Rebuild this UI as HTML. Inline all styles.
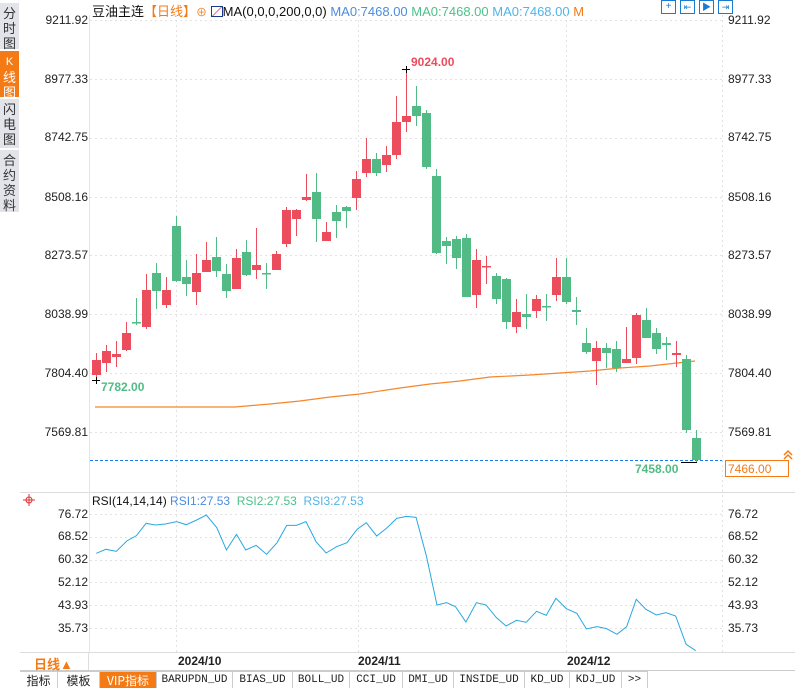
<!DOCTYPE html>
<html><head><meta charset="utf-8"><style>
*{margin:0;padding:0;box-sizing:border-box}
body{width:795px;height:688px;overflow:hidden;background:#fff;font-family:"Liberation Sans","Noto Sans CJK SC",sans-serif;position:relative}
.side{position:absolute;left:0;width:19px;background:#e3e3ea;color:#333;font-size:13px;line-height:15px;text-align:center;border-bottom:1px solid #fff}
.lab{position:absolute;font-size:12px;color:#222}
.l{right:707px;text-align:right}
.r{left:728px}
.tabs{position:absolute;top:671px;left:20px;height:17px;display:flex;font-size:11px;font-family:"Liberation Mono","Noto Sans CJK SC",monospace;border-top:1px solid #ccc}
.tabs div{border-right:1px solid #ccc;text-align:center;line-height:17px;color:#222}
</style></head><body>
<div class="side" style="top:3px;height:47px;padding-top:3px">分<br>时<br>图</div>
<div class="side" style="top:51px;height:47px;background:#f47a16;color:#fff;padding-top:2px"><span style="font-size:11px">K</span><br>线<br>图</div>
<div class="side" style="top:99px;height:50px;padding-top:3px">闪<br>电<br>图</div>
<div class="side" style="top:150px;height:63px;padding-top:3px">合<br>约<br>资<br>料</div>

<div style="position:absolute;top:1px;left:92px;font-size:13px;white-space:nowrap;color:#111">豆油主连<span style="color:#f47a16">【日线】</span><span style="color:#f47a16;font-size:11px">⊕</span> <span style="display:inline-block;width:12px;height:11px;border:1px solid #1a3a8a;vertical-align:-1px;background:linear-gradient(135deg,#fff 45%,#d33 50%,#fff 55%)"></span>MA(0,0,0,200,0,0) <span style="color:#4a8de0">MA0:7468.00</span> <span style="color:#4cc18a">MA0:7468.00</span> <span style="color:#4fb5e8">MA0:7468.00</span> <span style="color:#f47a16">M</span></div>
<div style="position:absolute;top:0;left:661px;display:flex;gap:4px">
<div style="width:15px;height:14px;border:1px solid #1a7bd0;color:#1a7bd0;font-size:10px;line-height:12px;text-align:center">+</div>
<div style="width:15px;height:14px;border:1px solid #1a7bd0;color:#1a7bd0;font-size:9px;line-height:12px;text-align:center">⇤</div>
<div style="width:15px;height:14px;border:1px solid #1a7bd0;color:#1a7bd0;font-size:9px;line-height:12px;text-align:center">▶</div>
<div style="width:15px;height:14px;border:1px solid #1a7bd0;color:#1a7bd0;font-size:9px;line-height:12px;text-align:center">⇥</div>
</div>

<svg width="795" height="688" style="position:absolute;left:0;top:0" xmlns="http://www.w3.org/2000/svg">
<g stroke="#e2e2e2" stroke-dasharray="2,3" stroke-width="1">
<line x1="90" y1="20.5" x2="722" y2="20.5"/><line x1="90" y1="79.5" x2="722" y2="79.5"/><line x1="90" y1="138.5" x2="722" y2="138.5"/><line x1="90" y1="197.5" x2="722" y2="197.5"/><line x1="90" y1="255.5" x2="722" y2="255.5"/><line x1="90" y1="314.5" x2="722" y2="314.5"/><line x1="90" y1="373.5" x2="722" y2="373.5"/><line x1="90" y1="432.5" x2="722" y2="432.5"/>
<line x1="176.5" y1="15" x2="176.5" y2="652"/><line x1="358.5" y1="15" x2="358.5" y2="652"/><line x1="566.5" y1="15" x2="566.5" y2="652"/>
<line x1="90" y1="514.5" x2="722" y2="514.5"/><line x1="90" y1="537.5" x2="722" y2="537.5"/><line x1="90" y1="560.5" x2="722" y2="560.5"/><line x1="90" y1="582.5" x2="722" y2="582.5"/><line x1="90" y1="605.5" x2="722" y2="605.5"/><line x1="90" y1="628.5" x2="722" y2="628.5"/>
<line x1="722.5" y1="15" x2="722.5" y2="652"/>
</g>
<line x1="20" y1="492.5" x2="795" y2="492.5" stroke="#ddd"/>
<line x1="20" y1="652.5" x2="795" y2="652.5" stroke="#ddd"/>
<line x1="20" y1="670.5" x2="795" y2="670.5" stroke="#ccc"/>
<line x1="88.5" y1="652" x2="88.5" y2="670" stroke="#ddd"/>
<line x1="89.5" y1="15" x2="89.5" y2="652" stroke="#e4e4e4"/>
<line x1="90" y1="460.5" x2="722" y2="460.5" stroke="#1a7bf0" stroke-dasharray="3,2"/>
<polyline fill="none" stroke="#f5862a" stroke-width="1.2" points="95,407 235,407 270,404 300,401 330,397 360,394 400,388 430,384 460,381 490,377 530,375 560,373 590,371 620,368 650,366 695,361"/>
<g stroke-width="1">
<g fill="#ec4d5c" stroke="#ec4d5c">
<line x1="96.5" y1="353" x2="96.5" y2="380"/><rect x="92" y="360" width="9" height="15" stroke="none"/>
<line x1="106.5" y1="345" x2="106.5" y2="372"/><rect x="102" y="351" width="9" height="12" stroke="none"/>
<line x1="116.5" y1="341" x2="116.5" y2="367"/><rect x="112" y="354" width="9" height="3" stroke="none"/>
<line x1="126.5" y1="322" x2="126.5" y2="351"/><rect x="122" y="333" width="9" height="17" stroke="none"/>
<line x1="146.5" y1="274" x2="146.5" y2="329"/><rect x="142" y="290" width="9" height="37" stroke="none"/>
<line x1="166.5" y1="277" x2="166.5" y2="308"/><rect x="162" y="290" width="9" height="15" stroke="none"/>
<line x1="196.5" y1="254" x2="196.5" y2="305"/><rect x="192" y="273" width="9" height="19" stroke="none"/>
<line x1="206.5" y1="242" x2="206.5" y2="272"/><rect x="202" y="260" width="9" height="12" stroke="none"/>
<line x1="236.5" y1="249" x2="236.5" y2="289"/><rect x="232" y="258" width="9" height="31" stroke="none"/>
<line x1="256.5" y1="228" x2="256.5" y2="279"/><rect x="252" y="265" width="9" height="5" stroke="none"/>
<line x1="276.5" y1="251" x2="276.5" y2="270"/><rect x="272" y="254" width="9" height="16" stroke="none"/>
<line x1="286.5" y1="207" x2="286.5" y2="247"/><rect x="282" y="210" width="9" height="34" stroke="none"/>
<line x1="296.5" y1="209" x2="296.5" y2="236"/><rect x="292" y="210" width="9" height="9" stroke="none"/>
<line x1="306.5" y1="174" x2="306.5" y2="201"/><rect x="302" y="197" width="9" height="3" stroke="none"/>
<line x1="326.5" y1="222" x2="326.5" y2="241"/><rect x="322" y="232" width="9" height="9" stroke="none"/>
<line x1="356.5" y1="171" x2="356.5" y2="210"/><rect x="352" y="179" width="9" height="19" stroke="none"/>
<line x1="366.5" y1="138" x2="366.5" y2="177"/><rect x="362" y="159" width="9" height="14" stroke="none"/>
<line x1="386.5" y1="146" x2="386.5" y2="172"/><rect x="382" y="155" width="9" height="10" stroke="none"/>
<line x1="396.5" y1="96" x2="396.5" y2="159"/><rect x="392" y="122" width="9" height="33" stroke="none"/>
<line x1="406.5" y1="69" x2="406.5" y2="132"/><rect x="402" y="116" width="9" height="6" stroke="none"/>
<line x1="476.5" y1="249" x2="476.5" y2="308"/><rect x="472" y="260" width="9" height="35" stroke="none"/>
<line x1="486.5" y1="256" x2="486.5" y2="284"/><rect x="482" y="266" width="9" height="1.5" stroke="none"/>
<line x1="516.5" y1="299" x2="516.5" y2="333"/><rect x="512" y="312" width="9" height="15" stroke="none"/>
<line x1="536.5" y1="295" x2="536.5" y2="318"/><rect x="532" y="299" width="9" height="12" stroke="none"/>
<line x1="556.5" y1="258" x2="556.5" y2="301"/><rect x="552" y="277" width="9" height="18" stroke="none"/>
<line x1="596.5" y1="341" x2="596.5" y2="385"/><rect x="592" y="348" width="9" height="13" stroke="none"/>
<line x1="626.5" y1="327" x2="626.5" y2="363"/><rect x="622" y="359" width="9" height="4" stroke="none"/>
<line x1="636.5" y1="313" x2="636.5" y2="364"/><rect x="632" y="315" width="9" height="43" stroke="none"/>
<line x1="676.5" y1="341" x2="676.5" y2="367"/><rect x="672" y="353" width="9" height="2" stroke="none"/>
</g>
<g fill="#52bb85" stroke="#52bb85">
<line x1="136.5" y1="298" x2="136.5" y2="325"/><rect x="132" y="322" width="9" height="1.5" stroke="none"/>
<line x1="156.5" y1="263" x2="156.5" y2="309"/><rect x="152" y="273" width="9" height="18" stroke="none"/>
<line x1="176.5" y1="216" x2="176.5" y2="282"/><rect x="172" y="226" width="9" height="55" stroke="none"/>
<line x1="186.5" y1="260" x2="186.5" y2="296"/><rect x="182" y="277" width="9" height="7" stroke="none"/>
<line x1="216.5" y1="237" x2="216.5" y2="277"/><rect x="212" y="257" width="9" height="14" stroke="none"/>
<line x1="226.5" y1="264" x2="226.5" y2="298"/><rect x="222" y="274" width="9" height="17" stroke="none"/>
<line x1="246.5" y1="240" x2="246.5" y2="276"/><rect x="242" y="252" width="9" height="23" stroke="none"/>
<line x1="266.5" y1="263" x2="266.5" y2="289"/><rect x="262" y="273" width="9" height="1.5" stroke="none"/>
<line x1="316.5" y1="173" x2="316.5" y2="242"/><rect x="312" y="192" width="9" height="27" stroke="none"/>
<line x1="336.5" y1="205" x2="336.5" y2="238"/><rect x="332" y="212" width="9" height="9" stroke="none"/>
<line x1="346.5" y1="206" x2="346.5" y2="228"/><rect x="342" y="207" width="9" height="4" stroke="none"/>
<line x1="376.5" y1="153" x2="376.5" y2="176"/><rect x="372" y="159" width="9" height="14" stroke="none"/>
<line x1="416.5" y1="86" x2="416.5" y2="126"/><rect x="412" y="106" width="9" height="10" stroke="none"/>
<line x1="426.5" y1="110" x2="426.5" y2="169"/><rect x="422" y="113" width="9" height="54" stroke="none"/>
<line x1="436.5" y1="169" x2="436.5" y2="254"/><rect x="432" y="176" width="9" height="77" stroke="none"/>
<line x1="446.5" y1="237" x2="446.5" y2="264"/><rect x="442" y="241" width="9" height="5" stroke="none"/>
<line x1="456.5" y1="236" x2="456.5" y2="269"/><rect x="452" y="239" width="9" height="19" stroke="none"/>
<line x1="466.5" y1="234" x2="466.5" y2="297"/><rect x="462" y="238" width="9" height="59" stroke="none"/>
<line x1="496.5" y1="273" x2="496.5" y2="304"/><rect x="492" y="276" width="9" height="23" stroke="none"/>
<line x1="506.5" y1="278" x2="506.5" y2="329"/><rect x="502" y="279" width="9" height="43" stroke="none"/>
<line x1="526.5" y1="294" x2="526.5" y2="329"/><rect x="522" y="314" width="9" height="3" stroke="none"/>
<line x1="546.5" y1="294" x2="546.5" y2="321"/><rect x="542" y="306" width="9" height="1.5" stroke="none"/>
<line x1="566.5" y1="258" x2="566.5" y2="304"/><rect x="562" y="277" width="9" height="25" stroke="none"/>
<line x1="576.5" y1="297" x2="576.5" y2="325"/><rect x="572" y="310" width="9" height="2" stroke="none"/>
<line x1="586.5" y1="328" x2="586.5" y2="354"/><rect x="582" y="343" width="9" height="9" stroke="none"/>
<line x1="606.5" y1="343" x2="606.5" y2="368"/><rect x="602" y="348" width="9" height="5" stroke="none"/>
<line x1="616.5" y1="341" x2="616.5" y2="372"/><rect x="612" y="349" width="9" height="19" stroke="none"/>
<line x1="646.5" y1="308" x2="646.5" y2="338"/><rect x="642" y="320" width="9" height="18" stroke="none"/>
<line x1="656.5" y1="328" x2="656.5" y2="354"/><rect x="652" y="333" width="9" height="16" stroke="none"/>
<line x1="666.5" y1="337" x2="666.5" y2="360"/><rect x="662" y="343" width="9" height="2" stroke="none"/>
<line x1="686.5" y1="355" x2="686.5" y2="433"/><rect x="682" y="359" width="9" height="71" stroke="none"/>
<line x1="696.5" y1="430" x2="696.5" y2="462"/><rect x="692" y="438" width="9" height="22" stroke="none"/>
</g>
</g>
<g stroke="#000"><line x1="92" y1="380.5" x2="100" y2="380.5"/><line x1="96.5" y1="377" x2="96.5" y2="384"/>
<line x1="402" y1="69.5" x2="410" y2="69.5"/><line x1="406.5" y1="66" x2="406.5" y2="73"/>
<line x1="681" y1="462.5" x2="697" y2="462.5"/></g>
<text x="101" y="391" font-size="12" fill="#52bb85" font-weight="bold" font-family="Liberation Sans">7782.00</text>
<text x="411" y="66" font-size="12" fill="#ec4d5c" font-weight="bold" font-family="Liberation Sans">9024.00</text>
<text x="635" y="473" font-size="12" fill="#52bb85" font-weight="bold" font-family="Liberation Sans">7458.00</text>
<rect x="725.5" y="460.5" width="63" height="16" fill="#fff" stroke="#f47a16"/>
<text x="728" y="473" font-size="12" fill="#f47a16" font-family="Liberation Sans">7466.00</text>
<path d="M784 455 l4 -4 l4 4 M784 459 l4 -4 l4 4" stroke="#f47a16" fill="none" stroke-width="1.5"/>
<g transform="translate(85,490) scale(0.4018,0.3333)"><polyline fill="none" stroke="#2aa8e0" stroke-width="3" vector-effect="non-scaling-stroke" points="28,190 52,178 78,184 105,152 128,137 152,100 175,105 200,102 228,95 252,104 278,90 302,75 328,113 352,180 377,133 400,180 426,166 452,193 478,158 502,106 526,106 550,95 575,155 600,189 626,170 652,158 677,118 700,98 726,138 750,115 776,85 800,79 824,82 850,200 876,345 900,338 922,350 948,396 974,338 998,345 1024,383 1048,408 1074,391 1098,397 1124,364 1148,376 1172,325 1198,356 1224,370 1248,417 1274,410 1298,416 1324,433 1348,410 1372,328 1396,358 1422,375 1446,368 1470,378 1496,463 1520,482" style="stroke-width:1"/></g>
<circle cx="29" cy="500" r="3" fill="none" stroke="#d33"/><path d="M23 500h12M29 494v12" stroke="#d33" stroke-width="1"/>
</svg>

<div class="lab l" style="top:13px">9211.92</div><div class="lab l" style="top:72px">8977.33</div><div class="lab l" style="top:130px">8742.75</div><div class="lab l" style="top:190px">8508.16</div><div class="lab l" style="top:248px">8273.57</div><div class="lab l" style="top:307px">8038.99</div><div class="lab l" style="top:366px">7804.40</div><div class="lab l" style="top:425px">7569.81</div>
<div class="lab l" style="top:507px">76.72</div><div class="lab l" style="top:529px">68.52</div><div class="lab l" style="top:552px">60.32</div><div class="lab l" style="top:575px">52.12</div><div class="lab l" style="top:598px">43.93</div><div class="lab l" style="top:621px">35.73</div>
<div class="lab r" style="top:13px">9211.92</div><div class="lab r" style="top:72px">8977.33</div><div class="lab r" style="top:130px">8742.75</div><div class="lab r" style="top:190px">8508.16</div><div class="lab r" style="top:248px">8273.57</div><div class="lab r" style="top:307px">8038.99</div><div class="lab r" style="top:366px">7804.40</div><div class="lab r" style="top:425px">7569.81</div>
<div class="lab r" style="top:507px">76.72</div><div class="lab r" style="top:529px">68.52</div><div class="lab r" style="top:552px">60.32</div><div class="lab r" style="top:575px">52.12</div><div class="lab r" style="top:598px">43.93</div><div class="lab r" style="top:621px">35.73</div>

<div style="position:absolute;top:494px;left:92px;font-size:12px;white-space:nowrap;color:#111">RSI(14,14,14) <span style="color:#4a8de0">RSI1:27.53</span>&nbsp; <span style="color:#4cc18a">RSI2:27.53</span>&nbsp; <span style="color:#4fb5e8">RSI3:27.53</span></div>

<div style="position:absolute;top:654px;left:34px;font-size:13px;color:#f47a16;font-weight:bold">日线▲</div>
<div style="position:absolute;top:654px;left:178px;font-size:12px;font-weight:bold;color:#222">2024/10</div>
<div style="position:absolute;top:654px;left:358px;font-size:12px;font-weight:bold;color:#222">2024/11</div>
<div style="position:absolute;top:654px;left:567px;font-size:12px;font-weight:bold;color:#222">2024/12</div>

<div class="tabs">
<div style="width:38px;font-family:'Noto Sans CJK SC',sans-serif;font-size:12px">指标</div>
<div style="width:42px;font-family:'Noto Sans CJK SC',sans-serif;font-size:12px">模板</div>
<div style="width:57px;background:#f47a16;color:#fff;font-size:12px;font-family:'Noto Sans CJK SC',sans-serif">VIP指标</div>
<div style="width:76px">BARUPDN_UD</div>
<div style="width:60px">BIAS_UD</div>
<div style="width:57px">BOLL_UD</div>
<div style="width:53px">CCI_UD</div>
<div style="width:51px">DMI_UD</div>
<div style="width:71px">INSIDE_UD</div>
<div style="width:45px">KD_UD</div>
<div style="width:52px">KDJ_UD</div>
<div style="width:26px">&gt;&gt;</div>
</div>
</body></html>
